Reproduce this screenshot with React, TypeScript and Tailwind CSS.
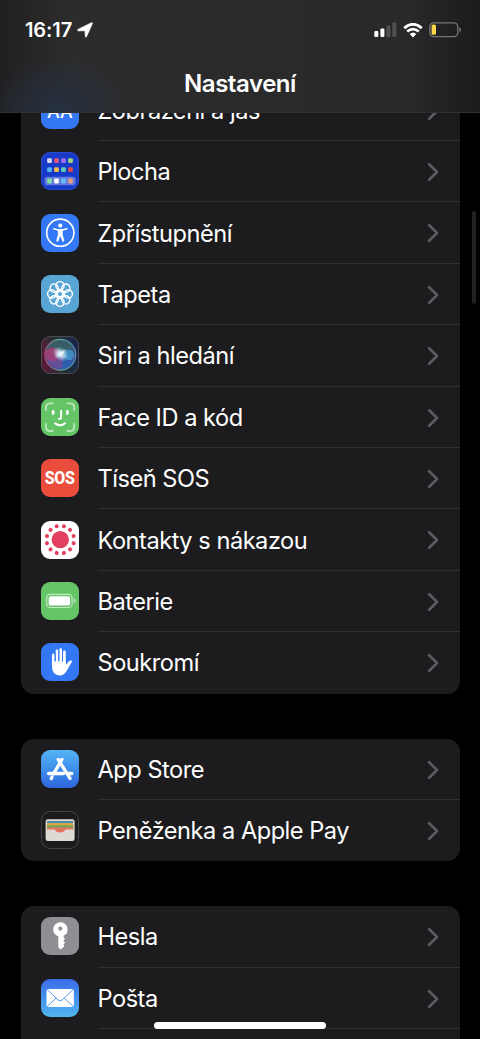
import type { ReactNode } from "react";

interface Item {
    label: string;
    icon: ReactNode;
    tile: string;
}

const angles8 = [0, 45, 90, 135, 180, 225, 270, 315];
const angles12 = [15, 45, 75, 105, 135, 165, 195, 225, 255, 285, 315, 345];

const homeDots = [
    ["#d5d8f0", "#e0577c", "#a06cf0", "#9fd07c"],
    ["#53b4f5", "#f2bd4a", "#62cdb4", "#dd4a44"],
    ["#7ee0a0", "#ffffff", "#67bdf7", "#eb9a80"],
];

const DisplayIcon = () => (
    <svg viewBox="0 0 38 38" className="size-full">
        <text x="19" y="27" textAnchor="middle" fontSize="18" fontWeight="500" fill="#fff" fontFamily="Inter, sans-serif">AA</text>
    </svg>
);

const HomeIcon = () => (
    <svg viewBox="0 0 38 38" className="size-full">
        <rect x="0.6" y="0.6" width="36.8" height="36.8" rx="8.6" fill="none" stroke="#2b48cb" strokeWidth="1.2" />
        <rect x="3.6" y="24.8" width="31" height="8.4" rx="2.5" fill="#6379dc" />
        {homeDots.map((row, r) =>
            row.map((color, c) => (
                <rect key={`${r}-${c}`} x={6.1 + c * 7} y={[6.2, 15.2, 26.6][r]} width="4.8" height="4.8" rx="1.3" fill={color} />
            ))
        )}
    </svg>
);

const AccessibilityIcon = () => (
    <svg viewBox="0 0 38 38" className="size-full">
        <circle cx="19.3" cy="18.7" r="13.6" fill="none" stroke="#fff" strokeWidth="1.6" />
        <g transform="translate(0.3 0)">
            <circle cx="19" cy="11.6" r="2.1" fill="#fff" />
            <path d="M12.4 14.8 L17 15.9 H21 L25.6 14.8" fill="none" stroke="#fff" strokeWidth="1.5" strokeLinecap="round" strokeLinejoin="round" />
            <path d="M16.7 15.5 H21.3 L21.1 20.6 L22.8 27 L21.4 27.5 L19.3 22.1 H18.7 L16.6 27.5 L15.2 27 L16.9 20.6 Z" fill="#fff" stroke="#fff" strokeWidth="0.5" strokeLinejoin="round" />
        </g>
    </svg>
);

const WallpaperIcon = () => (
    <svg viewBox="0 0 38 38" className="size-full">
        <g fill="none" stroke="#fff" strokeWidth="1.4">
            {angles8.map((a) => (
                <circle key={a} cx="19" cy="10.7" r="4.1" transform={`rotate(${a} 19 19)`} />
            ))}
            {angles8.map((a) => (
                <path key={a} d="M19 16.2 L17 13.4 M19 16.2 L21 13.4" transform={`rotate(${a} 19 19)`} />
            ))}
            <circle cx="19" cy="19" r="2.8" />
        </g>
    </svg>
);

const SiriIcon = () => (
    <svg viewBox="0 0 38 38" className="size-full">
        <defs>
            <linearGradient id="siriTile" x1="0" y1="0.6" x2="1" y2="0.4">
                <stop offset="0" stopColor="#5b1739" />
                <stop offset="0.45" stopColor="#25342f" />
                <stop offset="1" stopColor="#17264b" />
            </linearGradient>
            <linearGradient id="siriOrb" x1="0.2" y1="0" x2="0.6" y2="1">
                <stop offset="0" stopColor="#40585f" />
                <stop offset="0.4" stopColor="#35606a" />
                <stop offset="0.7" stopColor="#4a4c86" />
                <stop offset="1" stopColor="#3558a8" />
            </linearGradient>
            <linearGradient id="siriRim" x1="0" y1="0.6" x2="1" y2="0.4">
                <stop offset="0" stopColor="#b9447b" />
                <stop offset="0.45" stopColor="#5fa697" />
                <stop offset="1" stopColor="#5a8bb5" />
            </linearGradient>
            <radialGradient id="siriGlow">
                <stop offset="0" stopColor="#fff" />
                <stop offset="0.35" stopColor="#e5f5ff" stopOpacity="0.8" />
                <stop offset="1" stopColor="#9cd8ef" stopOpacity="0" />
            </radialGradient>
        </defs>
        <rect x="0.5" y="0.5" width="37" height="37" rx="8.6" fill="url(#siriTile)" stroke="#4a4b55" />
        <circle cx="19.3" cy="18.8" r="15.4" fill="url(#siriOrb)" stroke="url(#siriRim)" strokeWidth="1.2" />
        <circle cx="11.5" cy="18.6" r="7.2" fill="#b03a78" opacity="0.8" />
        <path d="M5.5 22 Q13 27 22 20 Q24 28 19 33 Q9 31 5.5 22 Z" fill="#7a4fa0" opacity="0.6" />
        <circle cx="28" cy="19" r="5.2" fill="#3f9fd6" opacity="0.75" />
        <path d="M22 20 Q27 26 32.5 25 Q29 32 21 33 Z" fill="#285fb4" opacity="0.8" />
        <ellipse cx="19.5" cy="18" rx="9" ry="6.5" fill="url(#siriGlow)" transform="rotate(40 19.5 18)" />
        <ellipse cx="20" cy="17.5" rx="8" ry="2.6" fill="url(#siriGlow)" transform="rotate(-35 20 17.5)" />
    </svg>
);

const FaceIcon = () => (
    <svg viewBox="0 0 38 38" className="size-full">
        <path d="M5 12 V9.5 Q5 5.4 9.2 5.4 H11.8 M26.4 5.4 H29 Q33.2 5.4 33.2 9.5 V12 M33.2 26 V28.7 Q33.2 33 29 33 H26.4 M11.8 33 H9.2 Q5 33 5 28.7 V26" fill="none" stroke="#b9e5bb" strokeWidth="1.9" strokeLinecap="round" />
        <g fill="none" stroke="#fff" strokeLinecap="round">
            <path d="M12.1 13.4 V15.6 M26.4 13.4 V15.6" strokeWidth="2.7" />
            <path d="M20.1 12.8 V19 Q20.1 21 17.8 20.9" strokeWidth="1.9" />
            <path d="M14.2 25.3 Q19.2 29.2 24 25.3" strokeWidth="2.1" />
        </g>
    </svg>
);

const SosIcon = () => (
    <span className="flex size-full items-center justify-center font-[Roboto,sans-serif] text-[19px] leading-6 font-extrabold tracking-[-0.5px] text-white">
        <span className="scale-x-[0.84]">SOS</span>
    </span>
);

const ExposureIcon = () => (
    <svg viewBox="0 0 38 38" className="size-full">
        <g fill="#e4405f">
            <circle cx="19.3" cy="18.6" r="8.7" />
            {angles12.map((a) => (
                <circle key={a} cx="19.3" cy="4.8" r="2.05" transform={`rotate(${a} 19.3 18.6)`} />
            ))}
        </g>
    </svg>
);

const BatteryIcon = () => (
    <svg viewBox="0 0 38 38" className="size-full">
        <rect x="5.7" y="12.3" width="25.4" height="13.2" rx="3.6" fill="none" stroke="#c4eac5" strokeWidth="1.2" />
        <rect x="7.7" y="14.2" width="21.4" height="9.4" rx="2.2" fill="#fff" />
        <path d="M32.7 16.6 Q35 17 35 18.9 Q35 20.8 32.7 21.2 Z" fill="#b1e1b3" />
    </svg>
);

const HandIcon = () => (
    <svg viewBox="0 0 38 38" className="size-full">
        <g stroke="#fff" strokeWidth="2.7" strokeLinecap="round">
            <path d="M12.3 11.9 V22 M16 7.8 V22 M19.7 6.6 V22 M23.4 8.8 V22" />
        </g>
        <path d="M10.95 18.5 H24.75 V22 L28 18.2 Q29.5 16.9 31 17.8 Q31.2 18.7 30.3 20 L25.8 27.7 Q22.9 32.4 18.8 32.4 Q10.95 32.3 10.95 23.6 Z" fill="#fff" />
        <path d="M14.15 10 V18 M17.85 8 V17.5 M21.55 9 V18" stroke="#3478f6" strokeWidth="0.9" strokeLinecap="round" />
    </svg>
);

const StoreIcon = () => (
    <svg viewBox="0 0 38 38" className="size-full">
        <g stroke="#fff" strokeWidth="3.3" strokeLinecap="round">
            <path d="M21 9.4 L12.4 24" />
            <path d="M17.2 9.4 L29 28.4" />
            <path d="M7.6 23.5 H22.5 M26.6 23.5 H30.8" />
            <path d="M11 27.2 L10.2 28.6" />
        </g>
    </svg>
);

const WalletIcon = () => (
    <svg viewBox="0 0 38 38" className="size-full">
        <rect x="0.5" y="0.5" width="37" height="37" rx="8.6" fill="#1c1c1e" stroke="#454547" />
        <rect x="4.6" y="8.2" width="29" height="21.8" rx="2.2" fill="#dedad1" />
        <path d="M6 10 H32.2 V12.6 H6 Z" fill="#4e8fa8" />
        <path d="M6 12.2 H32.2 V14.8 H6 Z" fill="#dca63d" />
        <path d="M6 14.2 H32.2 V17 H6 Z" fill="#75a350" />
        <path d="M6 16.6 H32.2 V18.6 H24.4 Q23.4 21.6 19.1 21.6 Q14.8 21.6 13.8 18.6 H6 Z" fill="#e47462" />
    </svg>
);

const KeyIcon = () => (
    <svg viewBox="0 0 38 38" className="size-full">
        <path fillRule="evenodd" d="M19.3 5.2 A7.2 7.2 0 0 1 22.6 18.8 V20.3 L24 21.9 L22.3 23.8 L24 25.6 L22.4 27.5 L23.5 29.3 L19.6 32.5 L17.3 30.2 V19.3 A7.2 7.2 0 0 1 19.3 5.2 Z M19.3 9.5 A2.1 2.1 0 1 0 19.3 13.7 A2.1 2.1 0 1 0 19.3 9.5 Z" fill="#fff" />
    </svg>
);

const MailIcon = () => (
    <svg viewBox="0 0 38 38" className="size-full">
        <rect x="5.5" y="10" width="27.4" height="18" rx="2" fill="#fff" />
        <path d="M6.4 10.7 L17.2 21 Q19.2 22.7 21.2 21 L32 10.7 M6.4 27.2 L15.2 19.1 M32 27.2 L23.2 19.1" fill="none" stroke="#418cec" strokeWidth="0.9" />
    </svg>
);

const groups: { className: string; items: Item[] }[] = [
    {
        className: "rounded-b-[13px]",
        items: [
            { label: "Zobrazení a jas", icon: <DisplayIcon />, tile: "bg-[#3478f6]" },
            { label: "Plocha", icon: <HomeIcon />, tile: "bg-[#173bc8]" },
            { label: "Zpřístupnění", icon: <AccessibilityIcon />, tile: "bg-[#3478f6]" },
            { label: "Tapeta", icon: <WallpaperIcon />, tile: "bg-[#58a5d5]" },
            { label: "Siri a hledání", icon: <SiriIcon />, tile: "bg-[#202128]" },
            { label: "Face ID a kód", icon: <FaceIcon />, tile: "bg-[#65c466]" },
            { label: "Tíseň SOS", icon: <SosIcon />, tile: "bg-[#eb4d3d]" },
            { label: "Kontakty s nákazou", icon: <ExposureIcon />, tile: "bg-white" },
            { label: "Baterie", icon: <BatteryIcon />, tile: "bg-[#65c466]" },
            { label: "Soukromí", icon: <HandIcon />, tile: "bg-[#3478f6]" },
        ],
    },
    {
        className: "rounded-[13px]",
        items: [
            { label: "App Store", icon: <StoreIcon />, tile: "bg-linear-to-b from-[#54b4f6] to-[#2f66de]" },
            { label: "Peněženka a Apple Pay", icon: <WalletIcon />, tile: "bg-[#1c1c1e]" },
        ],
    },
    {
        className: "rounded-t-[13px]",
        items: [
            { label: "Hesla", icon: <KeyIcon />, tile: "bg-[#8e8e93]" },
            { label: "Pošta", icon: <MailIcon />, tile: "bg-linear-to-b from-[#3b6be6] to-[#52b5ee]" },
            { label: "", icon: null, tile: "" },
        ],
    },
];

const Row = ({ item, last }: { item: Item; last: boolean }) => (
    <li className="flex h-[61.4px] shrink-0 pl-[20px]">
        <div className={`mt-[11.2px] size-[38px] shrink-0 rounded-[9px] ${item.tile}`}>{item.icon}</div>
        <div className={`ml-[19px] flex flex-1 items-center justify-between border-b pt-[1.6px] pr-[21px] ${last ? "border-transparent" : "border-[#2f2f31]"}`}>
            <span className="text-[23.6px] leading-none tracking-[-0.48px] whitespace-nowrap text-white">{item.label}</span>
            <svg viewBox="0 0 12 20" className="h-5 w-3" fill="none" stroke="#5b5b60" strokeWidth="2.7" strokeLinecap="round" strokeLinejoin="round">
                <path d="M2.2 2.3 L10 10 L2.2 17.7" />
            </svg>
        </div>
    </li>
);

const StatusBar = () => (
    <div className="flex h-[60px] items-center pr-[19px] pl-[25px]">
        <span className="text-[20px] leading-7 font-semibold tracking-[-0.1px] text-white">16:17</span>
        <svg viewBox="0 0 16 16" className="ml-[5px] size-4">
            <path d="M14.4 0.8 Q15.9 0.4 15.3 1.8 L9.7 14.5 Q8.8 16.1 8.3 14.4 L7.9 9.2 Q7.8 8.7 7.2 8.7 L1.3 8.9 Q-0.4 8.2 1.1 7.3 Z" fill="#fff" stroke="#fff" strokeWidth="0.6" />
        </svg>
        <svg viewBox="0 0 23 16" className="ml-auto h-4 w-[23px]">
            <rect x="0.3" y="9" width="4" height="6" rx="1.1" fill="#fff" />
            <rect x="6.4" y="6.4" width="4" height="8.6" rx="1.1" fill="#fff" />
            <rect x="12.4" y="3.4" width="4" height="11.6" rx="1.1" fill="#515153" />
            <rect x="18.3" y="0.4" width="4" height="14.6" rx="1.1" fill="#515153" />
        </svg>
        <svg viewBox="0 0 20 15" className="ml-[6px] h-[15px] w-5" fill="none" stroke="#fff">
            <path d="M1.2 5.1 Q10 -2.5 18.8 5.1" strokeWidth="2.8" />
            <path d="M4.2 8.6 Q10 3.5 15.8 8.6" strokeWidth="2.6" />
            <path d="M6.7 11 Q10 8 13.3 11 L10 14.4 Z" fill="#fff" stroke="none" />
        </svg>
        <svg viewBox="0 0 32 16" className="ml-[6px] h-4 w-8">
            <rect x="0.8" y="0.8" width="28" height="13.8" rx="4" fill="none" stroke="#767678" strokeWidth="1.3" />
            <rect x="2.6" y="2.6" width="4.4" height="10.2" rx="1.6" fill="#fad648" />
            <path d="M30.3 5.2 Q32 5.8 32 7.7 Q32 9.6 30.3 10.2 Z" fill="#767678" />
        </svg>
    </div>
);

const App = () => {
    return (
        <div className="relative flex h-[1039px] w-[480px] flex-col overflow-hidden bg-black font-[Inter,'Liberation_Sans',sans-serif]">
            <header className="relative z-10 h-[113px] shrink-0 border-b border-[#303032] bg-[#29292b] bg-[radial-gradient(ellipse_70px_50px_at_58px_107px,#263040,transparent),linear-gradient(90deg,#202021,#2c2c2d_15%,#29292b_85%,#1b1b1c)]">
                <StatusBar />
                <h1 className="mt-[8px] text-center text-[24px] leading-8 font-semibold tracking-[-0.45px] text-white">Nastavení</h1>
            </header>

            <main className="-mt-[33.4px] flex shrink-0 flex-col gap-[45px] pr-[20px] pl-[20.5px]">
                {groups.map((group, i) => (
                    <ul key={i} className={`flex flex-col overflow-hidden bg-[#1c1c1e] ${group.className}`}>
                        {group.items.map((item, j) => (
                            <Row key={j} item={item} last={j === group.items.length - 1} />
                        ))}
                    </ul>
                ))}
            </main>

            {/* scroll indicator */}
            <div className="absolute top-[211px] right-[4px] h-[93px] w-1 rounded-full bg-[#212122]" />
            {/* home indicator */}
            <div className="absolute bottom-[10px] left-[154px] h-[7px] w-[172px] rounded-full bg-white" />
        </div>
    );
};

export default App;
